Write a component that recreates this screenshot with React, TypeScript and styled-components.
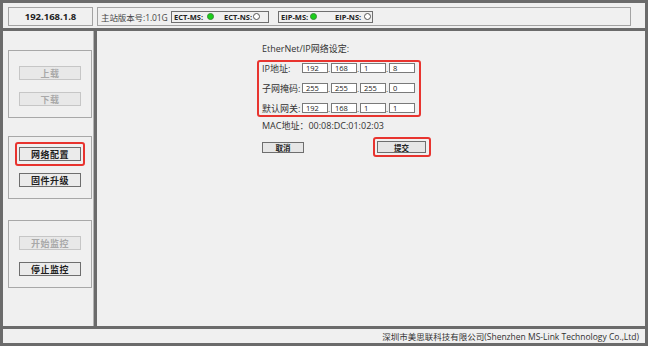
import React from 'react';
import styled, { createGlobalStyle } from 'styled-components';

const DARK = '#6b6b6b';
const RED = '#e8342f';

const GlobalStyle = createGlobalStyle`
  html, body { margin: 0; padding: 0; background: #ffffff; }
  body { font-family: "Open Sans", "Noto Sans CJK SC", sans-serif; color: #333; }
  * { box-sizing: border-box; }
`;

const Frame = styled.div`
  width: 648px;
  height: 346px;
  border: 3px solid ${DARK};
  background: #f0f0f0;
  display: flex;
  flex-direction: column;
`;

const TopBar = styled.div`
  height: 28px;
  flex: none;
  border-bottom: 3px solid ${DARK};
  display: flex;
  align-items: flex-start;
  padding: 4px 0 0 5px;
  gap: 4px;
`;

const IpBox = styled.div`
  width: 85px;
  height: 19px;
  border: 1px solid #a3a3a3;
  display: flex;
  align-items: center;
  justify-content: center;
  font-size: 9.5px;
  font-weight: 700;
  color: #222;
`;

const StatusBox = styled.div`
  width: 534px;
  height: 19px;
  border: 1px solid #a3a3a3;
  display: flex;
  align-items: center;
  padding-left: 3px;
`;

const Version = styled.span`
  width: 70px;
  flex: none;
  font-size: 8.5px;
  letter-spacing: -0.1px;
  color: #444;
  white-space: nowrap;
`;

const LedBox = styled.div<{ $w: number; $ml: number; $gap: number }>`
  width: ${(p) => p.$w}px;
  margin-left: ${(p) => p.$ml}px;
  height: 12px;
  border: 1px solid #6f6f6f;
  display: flex;
  align-items: center;
  padding-left: 2px;
  gap: ${(p) => p.$gap}px;
`;

const LedItem = styled.div<{ $lw: number }>`
  display: flex;
  align-items: center;
  & > span {
    width: ${(p) => p.$lw}px;
    font-size: 7.5px;
    font-weight: 700;
    color: #222;
    white-space: nowrap;
  }
`;

const Led = styled.i<{ $on?: boolean }>`
  display: block;
  width: 7px;
  height: 7px;
  border-radius: 50%;
  background: ${(p) => (p.$on ? '#19d019' : '#ffffff')};
  border: 1px solid ${(p) => (p.$on ? '#3a8a3a' : '#555555')};
`;

const Middle = styled.div`
  flex: 1;
  display: flex;
  min-height: 0;
`;

const LeftPanel = styled.div`
  width: 91px;
  flex: none;
  border-right: 1px solid #b2b2b2;
  padding: 19px 0 0 5px;
  display: flex;
  flex-direction: column;
  gap: 18px;
`;

const Group = styled.div<{ $pt: number; $gap: number; $mt?: number }>`
  width: 84px;
  border: 1px solid #a8a8a8;
  display: flex;
  flex-direction: column;
  align-items: center;
  padding: ${(p) => p.$pt}px 0 11px;
  gap: ${(p) => p.$gap}px;
  margin-top: ${(p) => p.$mt ?? 0}px;
`;

const SideButton = styled.div<{ $disabled?: boolean }>`
  width: 62px;
  height: 14px;
  border: 1px solid ${(p) => (p.$disabled ? '#c6c6c6' : '#6e6e6e')};
  background: ${(p) => (p.$disabled ? '#e8e8e8' : '#ebebeb')};
  color: ${(p) => (p.$disabled ? '#a9a9a9' : '#1e1e1e')};
  font-size: 9px;
  font-weight: 700;
  display: flex;
  align-items: center;
  justify-content: center;
  letter-spacing: 0.5px;
`;

const Focus = styled.div<{ $p: string }>`
  border: 2px solid ${RED};
  border-radius: 3px;
  padding: ${(p) => p.$p};
  display: flex;
`;

const MainPanel = styled.div`
  flex: 1;
  border-left: 3px solid ${DARK};
  padding: 12px 0 0 160px;
  display: flex;
  flex-direction: column;
  align-items: flex-start;
`;

const Line = styled.div<{ $mt?: number }>`
  height: 12px;
  line-height: 12px;
  font-size: 9px;
  color: #333;
  padding-left: 5px;
  margin-top: ${(p) => p.$mt ?? 0}px;
  white-space: nowrap;
`;

const Settings = styled.div`
  margin-top: 5px;
  width: 164px;
  border: 2px solid ${RED};
  border-radius: 3px;
  padding: 1px 4px 2px 3px;
  display: flex;
  flex-direction: column;
  gap: 10px;
`;

const Row = styled.div`
  height: 10px;
  display: flex;
  align-items: center;
`;

const Label = styled.span`
  width: 40px;
  flex: none;
  font-size: 9px;
  color: #333;
  white-space: nowrap;
`;

const Octet = styled.div`
  width: 26px;
  height: 10px;
  flex: none;
  border: 1px solid #7a7a7a;
  background: #ffffff;
  font-size: 7.5px;
  line-height: 8px;
  padding-left: 3px;
  color: #222;
`;

const Sep = styled.span`
  width: 3px;
  flex: none;
  font-size: 8px;
  line-height: 8px;
  align-self: flex-end;
  color: #333;
`;

const ButtonRow = styled.div`
  margin-top: 5px;
  width: 174px;
  padding-left: 5px;
  display: flex;
  justify-content: space-between;
  align-items: center;
`;

const DialogButton = styled.div<{ $w: number; $h: number }>`
  width: ${(p) => p.$w}px;
  height: ${(p) => p.$h}px;
  border: 1px solid #6e6e6e;
  background: #e6e6e6;
  font-size: 7.5px;
  font-weight: 700;
  color: #222;
  display: flex;
  align-items: center;
  justify-content: center;
`;

const Footer = styled.div`
  height: 17px;
  flex: none;
  border-top: 3px solid ${DARK};
  display: flex;
  align-items: center;
  justify-content: flex-end;
  padding-right: 6px;
  font-size: 8.5px;
  color: #333;
  white-space: nowrap;
`;

const rows: { label: string; values: string[] }[] = [
  { label: 'IP地址:', values: ['192', '168', '1', '8'] },
  { label: '子网掩码:', values: ['255', '255', '255', '0'] },
  { label: '默认网关:', values: ['192', '168', '1', '1'] },
];

export default function App() {
  return (
    <>
      <GlobalStyle />
      <Frame>
        <TopBar>
          <IpBox>192.168.1.8</IpBox>
          <StatusBox>
            <Version>主站版本号:1.01G</Version>
            <LedBox $w={98} $ml={0} $gap={10}>
              <LedItem $lw={33}>
                <span>ECT-MS:</span>
                <Led $on />
              </LedItem>
              <LedItem $lw={29}>
                <span>ECT-NS:</span>
                <Led />
              </LedItem>
            </LedBox>
            <LedBox $w={95} $ml={9} $gap={18}>
              <LedItem $lw={29}>
                <span>EIP-MS:</span>
                <Led $on />
              </LedItem>
              <LedItem $lw={29}>
                <span>EIP-NS:</span>
                <Led />
              </LedItem>
            </LedBox>
          </StatusBox>
        </TopBar>
        <Middle>
          <LeftPanel>
            <Group $pt={15} $gap={12}>
              <SideButton $disabled>上载</SideButton>
              <SideButton $disabled>下载</SideButton>
            </Group>
            <Group $pt={5} $gap={7}>
              <Focus $p="3px 2px">
                <SideButton>网络配置</SideButton>
              </Focus>
              <SideButton>固件升级</SideButton>
            </Group>
            <Group $pt={15} $gap={12} $mt={3}>
              <SideButton $disabled>开始监控</SideButton>
              <SideButton>停止监控</SideButton>
            </Group>
          </LeftPanel>
          <MainPanel>
            <Line>EtherNet/IP网络设定:</Line>
            <Settings>
              {rows.map((r) => (
                <Row key={r.label}>
                  <Label>{r.label}</Label>
                  {r.values.map((v, i) => (
                    <React.Fragment key={i}>
                      {i > 0 && <Sep>.</Sep>}
                      <Octet>{v}</Octet>
                    </React.Fragment>
                  ))}
                </Row>
              ))}
            </Settings>
            <Line $mt={3}>MAC地址：00:08:DC:01:02:03</Line>
            <ButtonRow>
              <DialogButton $w={42} $h={11}>取消</DialogButton>
              <Focus $p="2px 3px 2px 2px">
                <DialogButton $w={49} $h={12}>提交</DialogButton>
              </Focus>
            </ButtonRow>
          </MainPanel>
        </Middle>
        <Footer>深圳市美思联科技有限公司(Shenzhen MS-Link Technology Co.,Ltd)</Footer>
      </Frame>
    </>
  );
}
